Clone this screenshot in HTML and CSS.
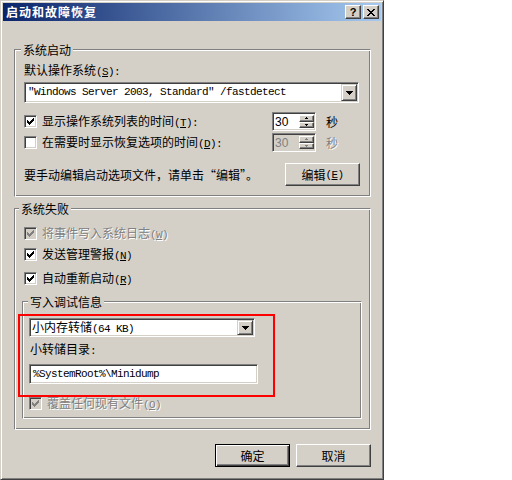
FILE: index.html
```html
<!DOCTYPE html>
<html lang="zh-CN">
<head>
<meta charset="utf-8">
<title>启动和故障恢复</title>
<link rel="stylesheet" href="styles.css">
</head>
<body>
<div class="window">
  <div class="titlebar">
    <span class="title">启动和故障恢复</span>
    <div class="tbtns">
      <span class="tbtn help">?</span>
      <span class="tbtn close"><svg width="8" height="7" viewBox="0 0 8 7" shape-rendering="crispEdges"><path d="M0 0h2v1H0z M6 0h2v1H6z M1 1h2v1H1z M5 1h2v1H5z M2 2h4v1H2z M3 3h2v1H3z M2 4h4v1H2z M1 5h2v1H1z M5 5h2v1H5z M0 6h2v1H0z M6 6h2v1H6z" fill="#000"/></svg></span>
    </div>
  </div>
  <div class="body">
    <div class="group g1">
      <div class="gtitle">系统启动</div>
      <div class="lbl l-default">默认操作系统<span class="lat">(<u>S</u>):</span></div>
      <div class="field combo c1">
        <span class="ctext lat">"Windows Server 2003, Standard" /fastdetect</span>
        <span class="dd"><svg width="7" height="4" viewBox="0 0 7 4" shape-rendering="crispEdges"><path d="M0 0h7v1H0z M1 1h5v1H1z M2 2h3v1H2z M3 3h1v1H3z" fill="#000"/></svg></span>
      </div>
      <div class="srow r1">
        <span class="cb"><svg width="7" height="7" viewBox="0 0 7 7" shape-rendering="crispEdges"><path d="M0 2h1v3H0z M1 3h1v3H1z M2 4h1v3H2z M3 3h1v3H3z M4 2h1v3H4z M5 1h1v3H5z M6 0h1v3H6z" fill="#000"/></svg></span>
        <span class="slabel">显示操作系统列表的时间<span class="lat">(<u>T</u>):</span></span>
        <span class="field spin">
          <span class="sval">30</span>
          <span class="ud">
            <span class="udb"><svg width="3" height="2" viewBox="0 0 3 2" shape-rendering="crispEdges"><path d="M1 0h1v1H1z M0 1h3v1H0z" fill="#000"/></svg></span>
            <span class="udb"><svg width="3" height="2" viewBox="0 0 3 2" shape-rendering="crispEdges"><path d="M0 0h3v1H0z M1 1h1v1H1z" fill="#000"/></svg></span>
          </span>
        </span>
        <span class="unit">秒</span>
      </div>
      <div class="srow r2">
        <span class="cb"></span>
        <span class="slabel">在需要时显示恢复选项的时间<span class="lat">(<u>D</u>):</span></span>
        <span class="field spin disabled">
          <span class="sval">30</span>
          <span class="ud">
            <span class="udb"><svg width="3" height="2" viewBox="0 0 3 2" shape-rendering="crispEdges"><path d="M1 0h1v1H1z M0 1h3v1H0z" fill="#808080"/></svg></span>
            <span class="udb"><svg width="3" height="2" viewBox="0 0 3 2" shape-rendering="crispEdges"><path d="M0 0h3v1H0z M1 1h1v1H1z" fill="#808080"/></svg></span>
          </span>
        </span>
        <span class="unit dis">秒</span>
      </div>
      <div class="erow">
        <span>要手动编辑启动选项文件，请单击“编辑”。</span>
        <span class="btn">编辑<span class="lat">(<u>E</u>)</span></span>
      </div>
    </div>

    <div class="group g2">
      <div class="gtitle">系统失败</div>
      <div class="crow c-log">
        <span class="cb disabled"><svg width="7" height="7" viewBox="0 0 7 7" shape-rendering="crispEdges"><path d="M0 2h1v3H0z M1 3h1v3H1z M2 4h1v3H2z M3 3h1v3H3z M4 2h1v3H4z M5 1h1v3H5z M6 0h1v3H6z" fill="#808080"/></svg></span>
        <span class="dis">将事件写入系统日志<span class="lat">(<u>W</u>)</span></span>
      </div>
      <div class="crow c-alert">
        <span class="cb"><svg width="7" height="7" viewBox="0 0 7 7" shape-rendering="crispEdges"><path d="M0 2h1v3H0z M1 3h1v3H1z M2 4h1v3H2z M3 3h1v3H3z M4 2h1v3H4z M5 1h1v3H5z M6 0h1v3H6z" fill="#000"/></svg></span>
        <span>发送管理警报<span class="lat">(<u>N</u>)</span></span>
      </div>
      <div class="crow c-restart">
        <span class="cb"><svg width="7" height="7" viewBox="0 0 7 7" shape-rendering="crispEdges"><path d="M0 2h1v3H0z M1 3h1v3H1z M2 4h1v3H2z M3 3h1v3H3z M4 2h1v3H4z M5 1h1v3H5z M6 0h1v3H6z" fill="#000"/></svg></span>
        <span>自动重新启动<span class="lat">(<u>R</u>)</span></span>
      </div>

      <div class="group g3">
        <div class="gtitle">写入调试信息</div>
        <div class="field combo c2">
          <span class="ctext">小内存转储<span class="lat">(64 KB)</span></span>
          <span class="dd"><svg width="7" height="4" viewBox="0 0 7 4" shape-rendering="crispEdges"><path d="M0 0h7v1H0z M1 1h5v1H1z M2 2h3v1H2z M3 3h1v1H3z" fill="#000"/></svg></span>
        </div>
        <div class="lbl l-dir">小转储目录<span class="lat">:</span></div>
        <div class="field edit"><span class="lat">%SystemRoot%\Minidump</span></div>
        <div class="crow c-over">
          <span class="cb disabled"><svg width="7" height="7" viewBox="0 0 7 7" shape-rendering="crispEdges"><path d="M0 2h1v3H0z M1 3h1v3H1z M2 4h1v3H2z M3 3h1v3H3z M4 2h1v3H4z M5 1h1v3H5z M6 0h1v3H6z" fill="#808080"/></svg></span>
          <span class="dis">覆盖任何现有文件<span class="lat">(<u>O</u>)</span></span>
        </div>
      </div>
    </div>

    <div class="brow">
      <span class="btn default">确定</span>
      <span class="btn">取消</span>
    </div>
  </div>
</div>
<div class="highlight"></div>
</body>
</html>
```

FILE: styles.css
```css
html, body {
  margin: 0;
  padding: 0;
  background: #ffffff;
}

body {
  font-family: "Noto Sans CJK SC", "Noto Sans", sans-serif;
  font-size: 12px;
  line-height: 14px;
  color: #000;
}

.window {
  position: relative;
  width: 384px;
  height: 480px;
  box-sizing: border-box;
  background: #d4d0c8;
  border: 1px solid;
  border-color: #d4d0c8 #404040 #404040 #d4d0c8;
  box-shadow: inset 1px 1px #ffffff, inset -1px -1px #808080;
  padding: 2px;
}

.titlebar {
  height: 18px;
  display: flex;
  align-items: center;
  justify-content: space-between;
  padding: 0 2px 0 3px;
  background: linear-gradient(to right, #0a246a, #a6caf0);
}

.title {
  color: #fff;
  font-weight: bold;
  letter-spacing: 1px;
  line-height: 14px;
}

.tbtns {
  display: flex;
  gap: 2px;
}

.tbtn {
  width: 16px;
  height: 14px;
  box-sizing: border-box;
  background: #d4d0c8;
  border: 1px solid;
  border-color: #ffffff #404040 #404040 #ffffff;
  box-shadow: inset -1px -1px #808080;
  display: flex;
  align-items: center;
  justify-content: center;
}

.help {
  font-family: "Liberation Sans", sans-serif;
  font-weight: bold;
  font-size: 11px;
  line-height: 12px;
}

.close svg {
  margin-left: -1px;
}

.body {
  padding: 28px 0 0 11px;
}

/* group boxes */
.group {
  box-sizing: border-box;
  border: 1px solid;
  border-color: #808080 #ffffff #ffffff #808080;
  box-shadow: inset 1px 1px #ffffff, inset -1px -1px #808080;
}

.gtitle {
  width: fit-content;
  margin: -7px 0 0 -3px;
  padding: 0 2px;
  background: #d4d0c8;
  line-height: 14px;
  height: 14px;
}

.g1 {
  width: 357px;
  height: 148px;
  padding: 0 10px 0 9px;
}

.g2 {
  width: 357px;
  height: 222px;
  margin-top: 11px;
  padding: 0 9px 0 7px;
}

.g3 {
  width: 340px;
  height: 118px;
  margin-top: 16px;
  padding: 0 6px 0 6px;
}

.g3 .gtitle {
  margin-left: -1px;
}

.lbl {
  line-height: 14px;
  height: 14px;
}

.l-default { margin-top: 6px; }
.l-dir { margin-top: 5px; margin-left: 1px; }

.lat {
  font-family: "Liberation Mono", monospace;
  font-size: 11px;
  letter-spacing: -0.6px;
}

/* sunken fields */
.field {
  box-sizing: border-box;
  background: #ffffff;
  border: 1px solid;
  border-color: #808080 #ffffff #ffffff #808080;
  box-shadow: inset 1px 1px #404040, inset -1px -1px #d4d0c8;
  padding: 1px;
  display: flex;
  align-items: center;
}

.combo .ctext {
  flex: 1;
  padding-left: 2px;
  white-space: nowrap;
  line-height: 13px;
}

.c1 {
  margin-top: 5px;
  width: 335px;
  height: 21px;
}

.dd {
  width: 16px;
  align-self: stretch;
  box-sizing: border-box;
  background: #d4d0c8;
  border: 1px solid;
  border-color: #d4d0c8 #404040 #404040 #d4d0c8;
  box-shadow: inset 1px 1px #ffffff, inset -1px -1px #808080;
  display: flex;
  align-items: center;
  justify-content: center;
}

.c2 {
  margin-top: 9px;
  width: 226px;
  height: 19px;
}

.c2 .ctext {
  padding-left: 1px;
}

.edit {
  margin-top: 8px;
  width: 229px;
  height: 20px;
  padding-left: 3px;
}

/* spin rows */
.srow {
  display: grid;
  grid-template-columns: 13px 1fr 44px 43px;
  align-items: center;
  height: 19px;
  width: 335px;
}

.r1 { margin-top: 9px; }
.r2 { margin-top: 2px; }

.slabel {
  padding-left: 5px;
  white-space: nowrap;
}

.spin {
  height: 19px;
  padding: 2px 1px 2px 2px;
  align-items: stretch;
}

.sval {
  flex: 1;
  font-family: "Liberation Sans", sans-serif;
  font-size: 12px;
  line-height: 15px;
}

.spin.disabled {
  background: #d4d0c8;
}

.spin.disabled .sval {
  color: #808080;
}

.ud {
  width: 15px;
  display: flex;
  flex-direction: column;
}

.udb {
  flex: 1;
  box-sizing: border-box;
  background: #d4d0c8;
  border: 1px solid;
  border-color: #ffffff #404040 #404040 #ffffff;
  box-shadow: inset -1px -1px #808080;
  display: flex;
  align-items: center;
  justify-content: center;
}

.unit {
  padding-left: 10px;
}

.dis {
  color: #808080;
  text-shadow: 1px 1px 0 #ffffff;
}

/* checkboxes */
.cb {
  width: 13px;
  height: 13px;
  box-sizing: border-box;
  background: #ffffff;
  border: 1px solid;
  border-color: #808080 #ffffff #ffffff #808080;
  box-shadow: inset 1px 1px #404040, inset -1px -1px #d4d0c8;
  display: flex;
  align-items: center;
  justify-content: center;
}

.cb.disabled {
  background: #d4d0c8;
}

.crow {
  display: flex;
  align-items: center;
  gap: 5px;
  height: 13px;
  padding-left: 2px;
  white-space: nowrap;
}

.c-log { margin-top: 11px; }
.c-alert { margin-top: 8px; }
.c-restart { margin-top: 11px; }
.c-over { margin-top: 13px; padding-left: 0; }

/* edit row */
.erow {
  margin-top: 11px;
  width: 336px;
  height: 23px;
  display: flex;
  align-items: center;
  justify-content: space-between;
}

/* buttons */
.btn {
  width: 75px;
  height: 23px;
  box-sizing: border-box;
  background: #d4d0c8;
  border: 1px solid;
  border-color: #ffffff #404040 #404040 #ffffff;
  box-shadow: inset -1px -1px #808080;
  display: flex;
  align-items: center;
  justify-content: center;
  white-space: nowrap;
}

.btn.default {
  border-color: #000000;
  box-shadow: inset 1px 1px #ffffff, inset -1px -1px #404040, inset -2px -2px #808080;
}

.brow {
  margin-top: 14px;
  width: 357px;
  display: flex;
  justify-content: flex-end;
  gap: 6px;
}

/* red annotation overlay */
.highlight {
  position: absolute;
  left: 18px;
  top: 314px;
  width: 257px;
  height: 83px;
  box-sizing: border-box;
  border: 2px solid #ff0000;
}
```
